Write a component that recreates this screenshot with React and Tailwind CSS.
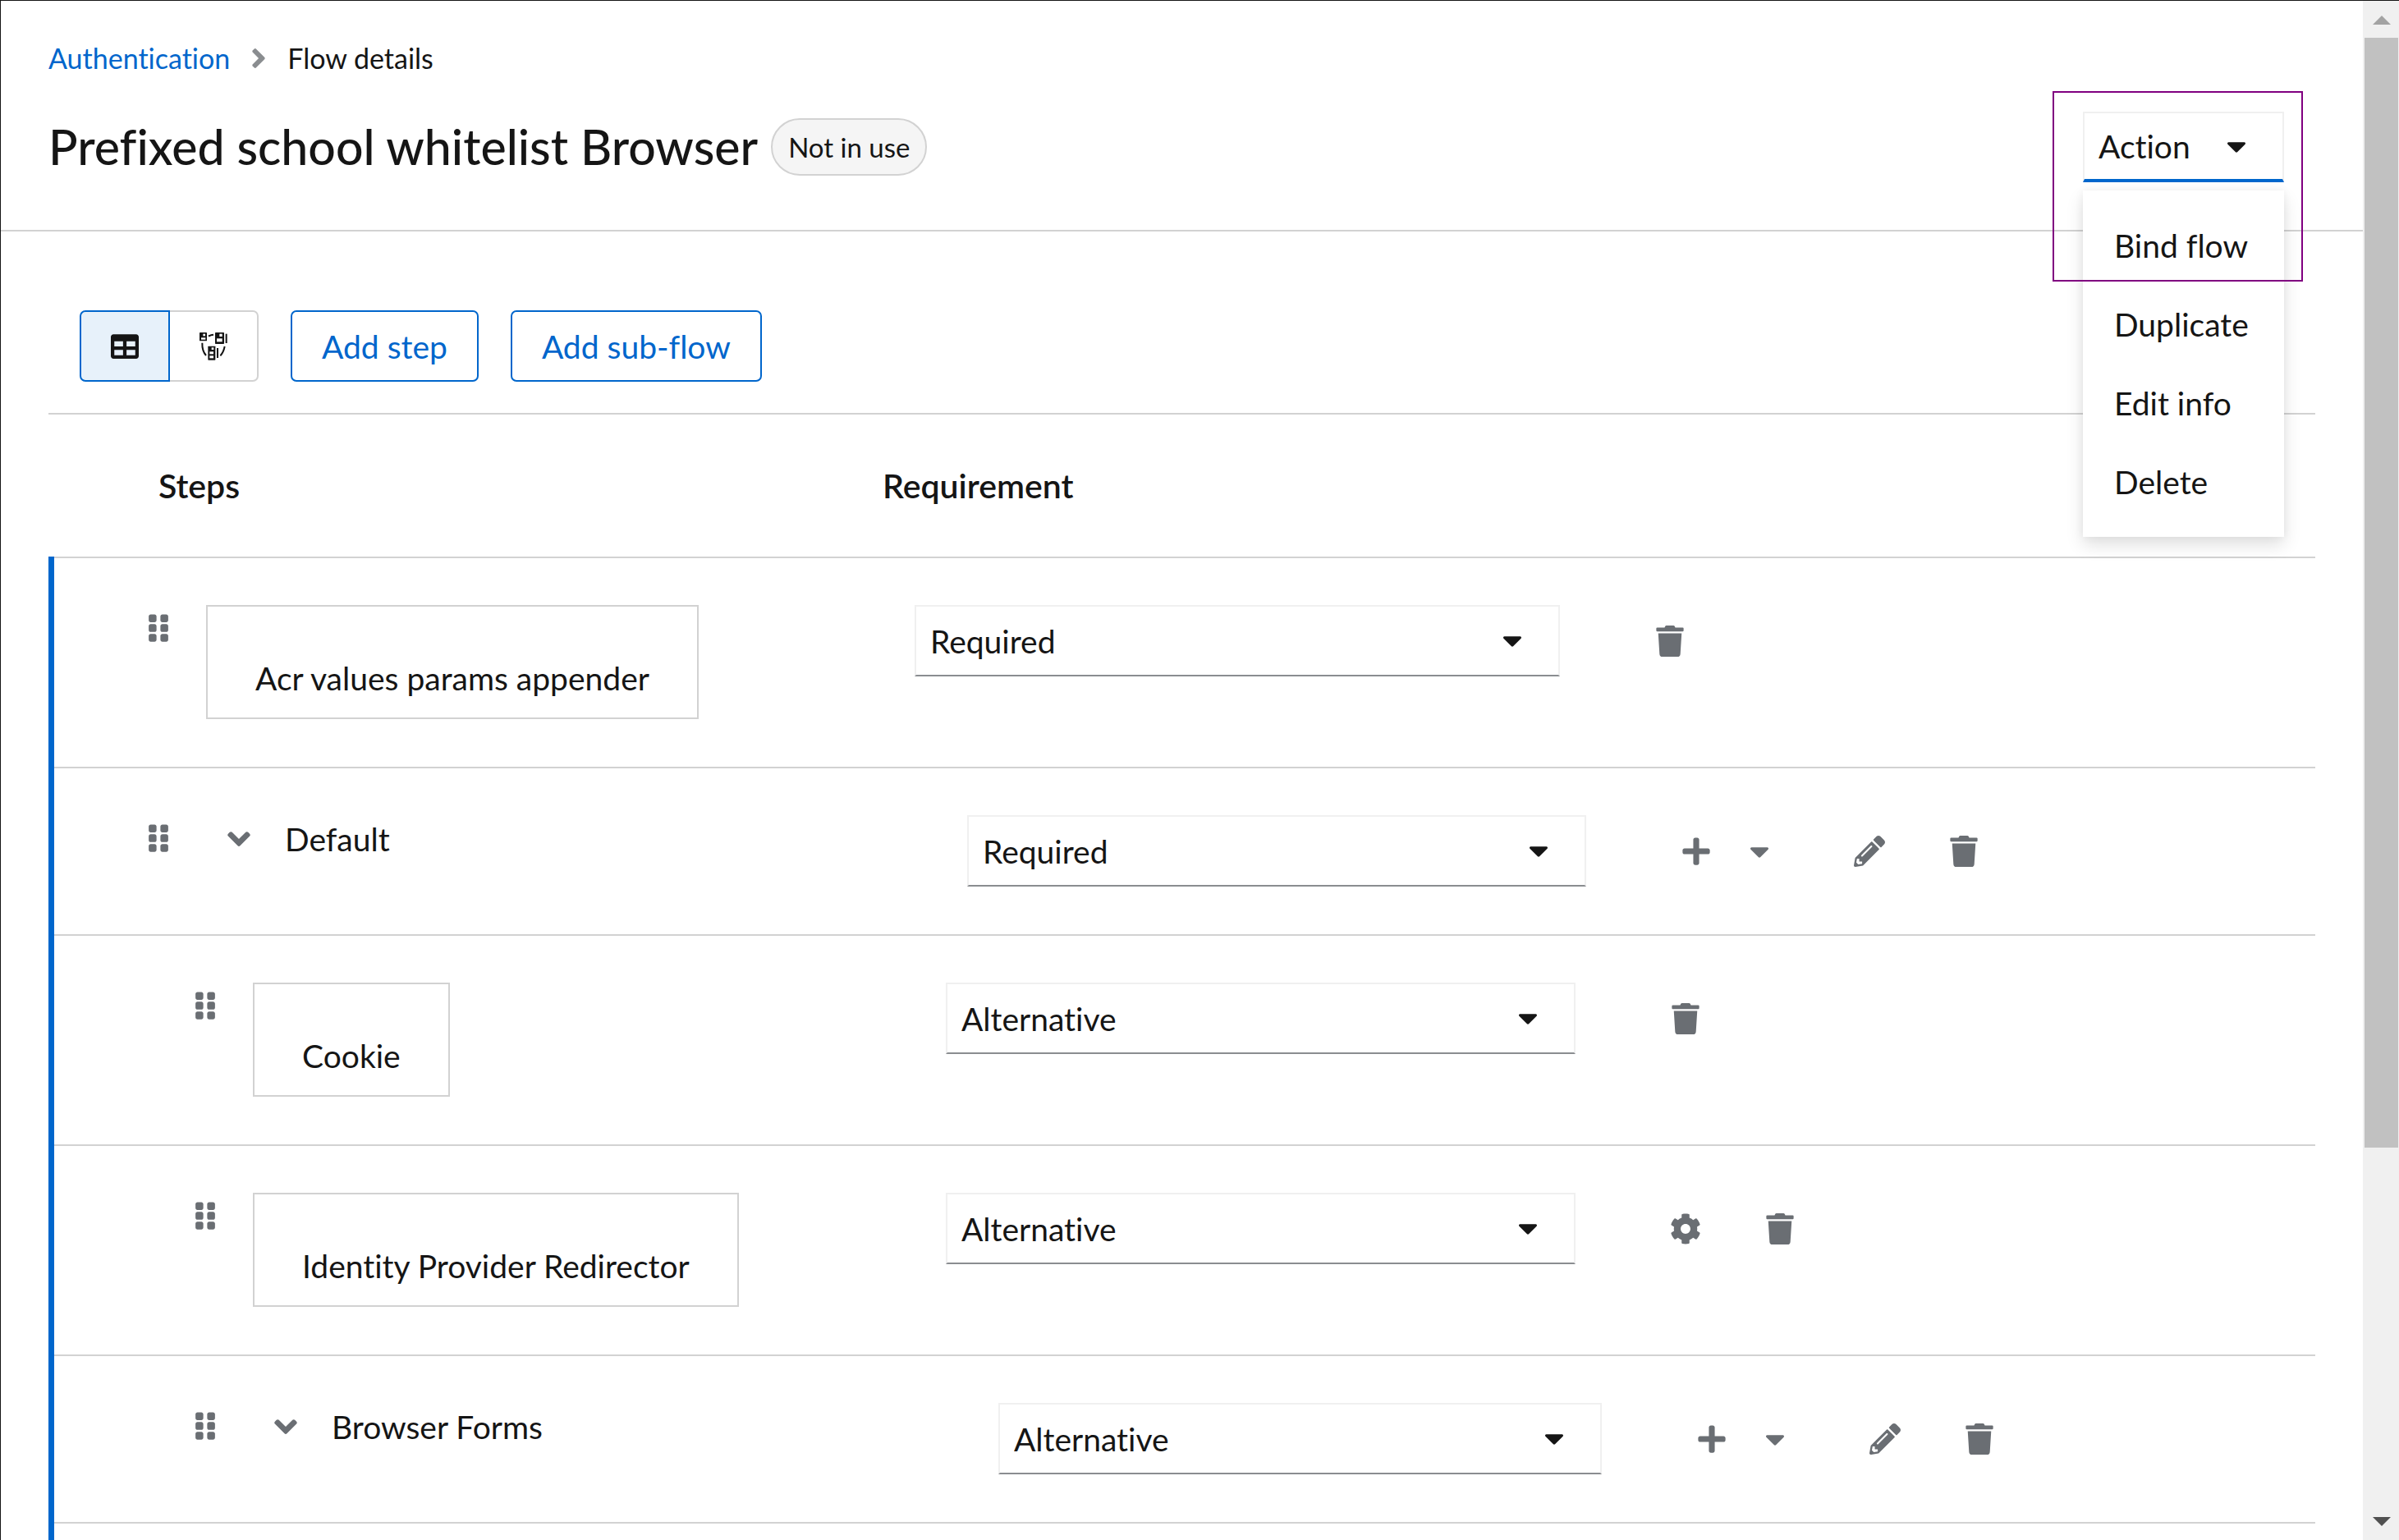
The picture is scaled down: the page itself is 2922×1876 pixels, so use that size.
import {
  FaAngleDown,
  FaAngleRight,
  FaCaretDown,
  FaCog,
  FaGripVertical,
  FaPencilAlt,
  FaPlus,
  FaTable,
  FaTrash,
} from 'react-icons/fa';

const rows = [
  { name: 'Acr values params appender', requirement: 'Required', kind: 'step', level: 1, actions: ['delete'] },
  { name: 'Default', requirement: 'Required', kind: 'flow', level: 1, actions: ['add', 'edit', 'delete'] },
  { name: 'Cookie', requirement: 'Alternative', kind: 'step', level: 2, actions: ['delete'] },
  { name: 'Identity Provider Redirector', requirement: 'Alternative', kind: 'step', level: 2, actions: ['settings', 'delete'] },
  { name: 'Browser Forms', requirement: 'Alternative', kind: 'flow', level: 2, actions: ['add', 'edit', 'delete'] },
];

const columns = {
  step1: 'grid-cols-[1048fr_786fr_920fr]',
  flow1: 'grid-cols-[1112fr_754fr_888fr]',
  step2: 'grid-cols-[1086fr_767fr_901fr]',
  flow2: 'grid-cols-[1150fr_735fr_869fr]',
};

function FlowIcon() {
  return (
    <svg viewBox="66 93 108 108" className="size-9" aria-hidden="true">
      <g fill="#151515">
        <rect x="69" y="96" width="27" height="31" rx="2" />
        <rect x="126" y="96" width="33" height="42" rx="2" />
        <rect x="164" y="101" width="6" height="34" />
        <rect x="100" y="146" width="27" height="51" rx="2" />
        <rect x="132" y="153" width="6" height="36" />
      </g>
      <g fill="#fff">
        <rect x="82" y="101" width="8" height="8" />
        <rect x="75" y="115" width="16" height="7" />
        <rect x="142" y="101" width="10" height="10" />
        <rect x="132" y="118" width="20" height="12" />
        <rect x="113" y="151" width="8" height="8" />
        <rect x="106" y="166" width="14" height="9" />
        <rect x="106" y="181" width="14" height="9" />
      </g>
      <g fill="none" stroke="#151515" strokeWidth="6">
        <path d="M102 110Q110 105 120 104" />
        <path d="M79 134Q78 163 93 180" />
        <path d="M161 147Q157 168 145 181" />
      </g>
    </svg>
  );
}

function RequirementSelect({ row }) {
  return (
    <div className="relative h-[87px]">
      <select
        aria-label={`Requirement for ${row.name}`}
        defaultValue={row.requirement}
        className="h-full w-full appearance-none rounded-none border-2 border-[#f0f0f0] border-b-[#8a8d90] bg-white pl-[17px] text-[39px] leading-[58px] text-[#151515]"
      >
        <option>Required</option>
        <option>Alternative</option>
        <option>Disabled</option>
        <option>Conditional</option>
      </select>
      <FaCaretDown className="pointer-events-none absolute top-6 right-[39px] size-[38px] text-[#151515]" />
    </div>
  );
}

function Action({ type, name }) {
  if (type === 'add') {
    return (
      <div className="mr-24 flex gap-[39px]">
        <button type="button" aria-label={`Add to ${name}`}><FaPlus className="size-[38px]" /></button>
        <button type="button" aria-label={`More ways to add to ${name}`}><FaCaretDown className="size-[38px]" /></button>
      </div>
    );
  }
  if (type === 'edit') {
    return <button type="button" className="mr-[77px]" aria-label={`Edit ${name}`}><FaPencilAlt className="size-[38px]" /></button>;
  }
  if (type === 'settings') {
    return <button type="button" className="mr-[77px]" aria-label={`Settings for ${name}`}><FaCog className="size-[38px]" /></button>;
  }
  return <button type="button" aria-label={`Delete ${name}`}><FaTrash className="size-[38px]" /></button>;
}

function Row({ row }) {
  const isFlow = row.kind === 'flow';
  return (
    <li className={`grid items-start border-t-2 border-[#d2d2d2] pt-[57px] pb-[58px] ${columns[row.kind + row.level]}`}>
      <div className={`flex items-start ${row.level === 1 ? 'pl-[108px]' : 'pl-[165px]'}`}>
        <button type="button" aria-label={`Drag ${row.name}`} className="mt-[9px] shrink-0 text-[#6a6e73]">
          <FaGripVertical className="size-[38px]" />
        </button>
        {isFlow ? (
          <div className="ml-[57px] flex items-center gap-[34px]">
            <button type="button" aria-label={`Collapse ${row.name}`} className="text-[#6a6e73]">
              <FaAngleDown className="size-11" />
            </button>
            <span className="text-[39px] leading-[58px]">{row.name}</span>
          </div>
        ) : (
          <div className="ml-[39px] border-2 border-[#d2d2d2] px-[58px] pt-[58px] pb-[19px] text-[39px] leading-[58px]">
            {row.name}
          </div>
        )}
      </div>
      <RequirementSelect row={row} />
      <div className="flex h-[87px] items-center pl-[115px] text-[#6a6e73]">
        {row.actions.map((a) => <Action key={a} type={a} name={row.name} />)}
      </div>
    </li>
  );
}

function ActionMenu() {
  return (
    <div className="relative z-10 w-[245px]">
      <button
        type="button"
        aria-expanded="true"
        aria-haspopup="menu"
        className="flex h-[86px] w-full items-center justify-between border-2 border-b-4 border-[#f0f0f0] border-b-[#0066cc] bg-white pr-[37px] pl-[17px] text-[39px] leading-[58px]"
      >
        Action
        <FaCaretDown className="size-[38px]" />
      </button>
      <ul role="menu" className="absolute top-24 left-0 w-full bg-white py-[19px] shadow-[0_10px_20px_rgba(3,3,3,0.12),0_0_10px_rgba(3,3,3,0.06)]">
        {['Bind flow', 'Duplicate', 'Edit info', 'Delete'].map((item) => (
          <li key={item} role="none">
            <button role="menuitem" type="button" className="w-full py-[19px] pl-[38px] text-left text-[39px] leading-[58px]">
              {item}
            </button>
          </li>
        ))}
      </ul>
      <div className="pointer-events-none absolute -top-[25px] -right-[23px] -left-[37px] h-[232px] border-2 border-[#800080]" />
    </div>
  );
}

function ScrollTrack() {
  return (
    <div className="flex w-11 shrink-0 flex-col items-center bg-[#f0f0f0]" aria-hidden="true">
      <svg viewBox="0 0 44 45" className="h-[45px] w-11 shrink-0"><path d="M12 29 23 18 34 29z" fill="#a3a3a3" /></svg>
      <div className="w-[41px] flex-[1352] bg-[#c1c1c1]" />
      <div className="flex-[433]" />
      <svg viewBox="0 0 44 45" className="h-[45px] w-11 shrink-0"><path d="M12 17H34L23 28z" fill="#505050" /></svg>
    </div>
  );
}

export default function App() {
  return (
    <div className="flex h-screen overflow-hidden border-t border-l border-[#151515] bg-white font-['Lato',sans-serif] text-[#151515] [font-variant-ligatures:none]">
      <main className="flex min-w-0 flex-1 flex-col">
        <header className="border-b-2 border-[#d2d2d2] pt-[45px] pr-24 pb-[58px] pl-[58px]">
          <nav aria-label="Breadcrumb" className="flex h-[50px] items-center text-[34px] leading-[50px]">
            <a href="#authentication" className="text-[#0066cc]">Authentication</a>
            <FaAngleRight className="mx-4 size-[38px] text-[#8a8d90]" />
            <span aria-current="page">Flow details</span>
          </nav>
          <div className="mt-10 flex items-center justify-between">
            <div className="flex items-center gap-4">
              <h1 className="text-[59px] leading-[76px] font-medium">Prefixed school whitelist Browser</h1>
              <span className="rounded-full border-2 border-[#d2d2d2] bg-[#f5f5f5] px-[19px] py-2 text-[33px] leading-[50px]">
                Not in use
              </span>
            </div>
            <ActionMenu />
          </div>
        </header>

        <section className="flex min-h-0 flex-1 flex-col pt-24 pr-[58px] pl-[58px]">
          <div className="flex shrink-0 items-center gap-[39px] border-b-2 border-[#d2d2d2] pb-[38px] pl-[38px]">
            <div className="flex h-[87px]" role="group" aria-label="View">
              <button
                type="button"
                aria-label="Table view"
                aria-pressed="true"
                className="flex w-[110px] items-center justify-center rounded-l-[7px] border-2 border-[#0066cc] bg-[#e7f1fa]"
              >
                <FaTable className="size-[34px]" />
              </button>
              <button
                type="button"
                aria-label="Diagram view"
                aria-pressed="false"
                className="flex w-[108px] items-center justify-center rounded-r-[7px] border-2 border-l-0 border-[#d2d2d2] bg-white"
              >
                <FlowIcon />
              </button>
            </div>
            {['Add step', 'Add sub-flow'].map((label) => (
              <button
                key={label}
                type="button"
                className="h-[87px] rounded-[7px] border-2 border-[#0066cc] px-9 text-[39px] leading-[58px] text-[#0066cc]"
              >
                {label}
              </button>
            ))}
          </div>

          <div className="grid shrink-0 grid-cols-[1016fr_1745fr] py-[58px] text-[41px] leading-[57px] font-semibold">
            <span className="pl-[134px]">Steps</span>
            <span>Requirement</span>
          </div>

          <ul className="min-h-0 flex-1 overflow-hidden border-l-[7px] border-[#0066cc]">
            {rows.map((row) => <Row key={row.name} row={row} />)}
            <li className="h-[255px] border-t-2 border-[#d2d2d2]" />
          </ul>
        </section>
      </main>
      <ScrollTrack />
    </div>
  );
}
